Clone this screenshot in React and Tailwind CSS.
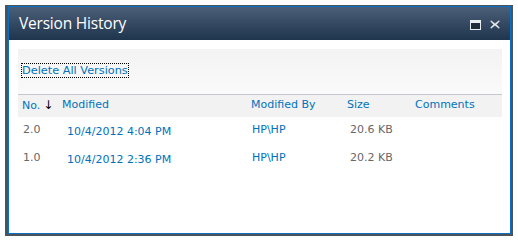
import React from 'react'

const versions = [
  { no: '2.0', modified: '10/4/2012 4:04 PM', by: 'HP\\HP', size: '20.6 KB' },
  { no: '1.0', modified: '10/4/2012 2:36 PM', by: 'HP\\HP', size: '20.2 KB' },
]

export default function App() {
  return (
    <div className="w-[518px] h-[240px] bg-white pl-[5px] pt-[5px] font-['DejaVu_Sans',sans-serif]">
      <div className="w-[508px] h-[231px] bg-[#4b535b] pl-[3px] pr-[2px] pt-[1px] pb-[2px]">
        <div className="h-full border border-[#0b6fc4] bg-white flex flex-col">
          {/* title bar */}
          <div className="h-[33px] flex items-center justify-between bg-gradient-to-b from-[#4b5f78] to-[#1f344d] pl-[10px] pr-[10px]">
            <span className="text-white text-[15.5px] font-['Open_Sans',sans-serif] tracking-[-0.2px]">Version History</span>
            <div className="flex items-center gap-[9px] pt-[2px]">
              <svg width="11" height="10" viewBox="0 0 11 10">
                <rect x="0.5" y="0.5" width="10" height="9" fill="#1d2b3b" stroke="#e8edf2" />
                <rect x="1" y="1" width="9" height="2" fill="#e8edf2" />
              </svg>
              <svg width="10" height="9" viewBox="0 0 10 9">
                <path d="M1 0.5 L5 3.5 L9 0.5 L9.5 1.5 L6.5 4.5 L9.5 7.5 L9 8.5 L5 5.5 L1 8.5 L0.5 7.5 L3.5 4.5 L0.5 1.5 Z" fill="#eef1f4" stroke="#9aa5b1" strokeWidth="0.5" />
              </svg>
            </div>
          </div>

          <div className="pl-[9px] pr-[8px] pt-[9px]">
            {/* toolbar */}
            <div className="h-[46px] bg-gradient-to-b from-[#f3f3f3] to-[#fafafa] border-b border-[#c4c8ce] pl-[4px] pt-[15px]">
              <a className="block w-fit text-[11.3px] leading-[13px] text-[#0072bc] outline-1 outline-dotted outline-black">
                Delete All Versions
              </a>
            </div>

            <table className="w-full border-collapse text-[11px]">
              <thead>
                <tr className="h-[22px] bg-[#f2f2f2] text-[#0072bc] text-left">
                  <th className="font-normal pl-[4px] pb-[2px] w-[44px]">
                    No.<span className="text-black text-[12px] ml-[3px]">↓</span>
                  </th>
                  <th className="font-normal pb-[2px] w-[189px]">Modified</th>
                  <th className="font-normal pb-[2px] w-[96px]">Modified By</th>
                  <th className="font-normal pb-[2px] w-[68px]">Size</th>
                  <th className="font-normal pb-[2px]">Comments</th>
                </tr>
              </thead>
              <tbody>
                {versions.map((v) => (
                  <tr key={v.no} className="h-[28px] align-top">
                    <td className="pl-[5px] pt-[5px] text-[#676767]">{v.no}</td>
                    <td className="pl-[5px] pt-[7px] text-[#0072bc]">{v.modified}</td>
                    <td className="pl-[1px] pt-[5px] text-[#0072bc]">{v.by}</td>
                    <td className="pl-[3px] pt-[5px] text-[#676767]">{v.size}</td>
                    <td></td>
                  </tr>
                ))}
              </tbody>
            </table>
          </div>
        </div>
      </div>
    </div>
  )
}
